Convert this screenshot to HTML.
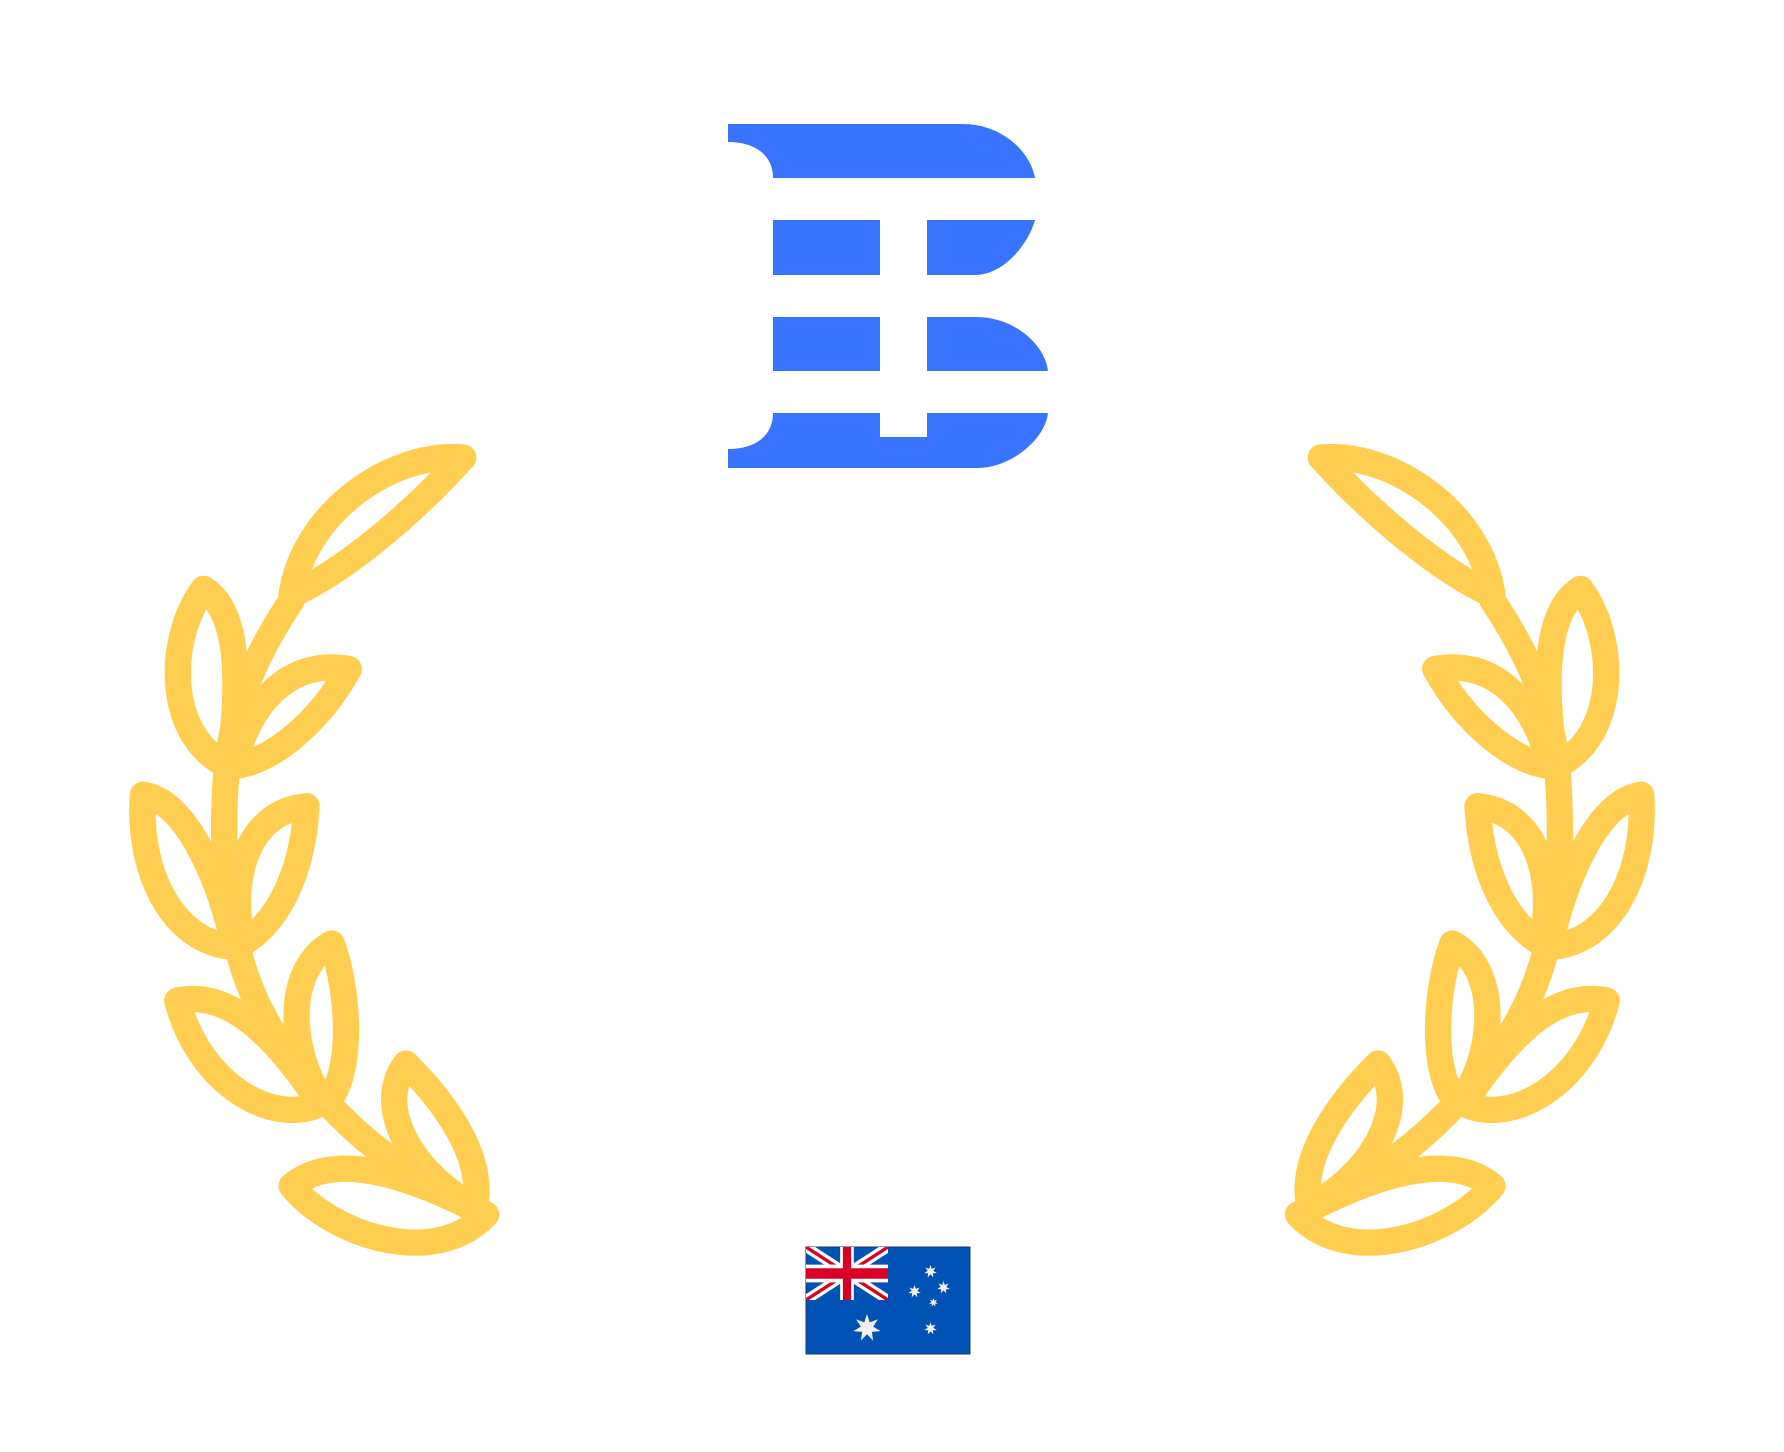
<!DOCTYPE html>
<html><head><meta charset="utf-8"><style>
html,body{margin:0;padding:0;background:#fff;width:1784px;height:1452px;overflow:hidden}
svg{position:absolute;left:0;top:0}
</style></head><body>
<svg width="1784" height="1452" viewBox="0 0 1784 1452">
<defs>
<symbol id="st" viewBox="-1 -1 2 2"><polygon fill="#f0f0f0" points="0,-1 .195,-.405 .782,-.623 .439,-.1 .975,.223 .352,.281 .434,.901 0,.45 -.434,.901 -.352,.281 -.975,.223 -.439,-.1 -.782,-.623 -.195,-.405"/></symbol>
</defs>
<g fill="#3874FF">
<path d="M728 124 H963 C1000 124 1030 150 1035 178 H773 C773 155 755 142 728 142 Z"/>
<path d="M773 220 H880 V275 H773 Z"/>
<path d="M927 220 H1035 C1028 245 1003 275 975 275 H927 Z"/>
<path d="M773 317 H880 V371 H773 Z"/>
<path d="M927 317 H976 C1015 317 1045 345 1048 371 H927 Z"/>
<path d="M773 413 H880 V437 H927 V413 H1048 C1045 440 1010 468 978 468 H728 V449 C755 449 773 436 773 413 Z"/>
</g>
<g transform="scale(1.1436)" fill="none" stroke="#FFCE51" stroke-width="23" stroke-linecap="round" stroke-linejoin="round">
<g id="L">
<path d="M255 525 C225 570 200 620 197 690 C192 780 205 850 240 905 C290 980 340 1020 420 1060"/>
<path d="M255 520 C265 450 340 395 405 400 C360 450 300 500 255 520 Z"/>
<path d="M200 670 C145 645 145 560 178 515 C210 535 210 600 200 670 Z"/>
<path d="M205 670 C215 620 250 575 305 585 C280 630 240 665 205 670 Z"/>
<path d="M205 828 C150 825 120 760 125 695 C160 700 190 760 205 828 Z"/>
<path d="M212 825 C200 770 215 710 268 705 C265 760 245 805 212 825 Z"/>
<path d="M285 965 C255 930 245 850 290 825 C305 865 310 940 285 965 Z"/>
<path d="M280 965 C240 985 175 950 155 875 C200 865 240 905 280 965 Z"/>
<path d="M415 1055 C365 1030 325 970 355 930 C385 960 425 1010 415 1055 Z"/>
<path d="M425 1062 C380 1110 290 1080 255 1037 C300 1000 380 1040 425 1062 Z"/>
</g>
<use href="#L" transform="translate(1560 0) scale(-1 1)"/>
</g>
<g>
<rect x="806" y="1247" width="164" height="107" fill="#0052B4" stroke="#1a3a6a" stroke-width="1"/>
<svg x="806" y="1247" width="82" height="53" viewBox="0 0 60 30" preserveAspectRatio="none">
<path d="M0 0L60 30M60 0L0 30" stroke="#fff" stroke-width="6"/>
<path d="M0 0L60 30M60 0L0 30" stroke="#D80027" stroke-width="2"/>
<path d="M30 0V30M0 15H60" stroke="#fff" stroke-width="10"/>
<path d="M30 0V30M0 15H60" stroke="#D80027" stroke-width="6"/>
</svg>
<use href="#st" x="853" y="1314" width="28" height="28"/>
<use href="#st" x="924" y="1265" width="13" height="13"/>
<use href="#st" x="937" y="1281" width="13" height="13"/>
<use href="#st" x="908" y="1285" width="13" height="13"/>
<use href="#st" x="929" y="1298" width="9" height="9"/>
<use href="#st" x="924" y="1322" width="13" height="13"/>
</g>
</svg>
</body></html>
